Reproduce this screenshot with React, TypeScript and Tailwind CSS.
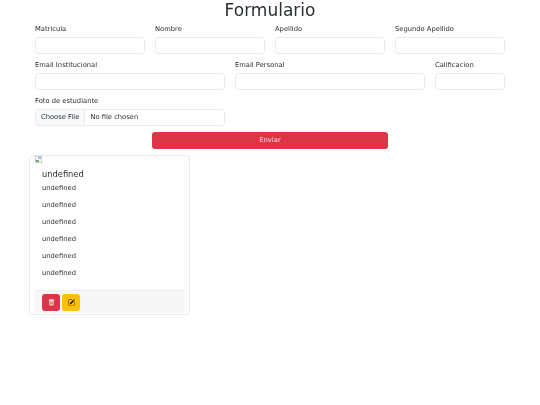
import React from 'react';
import { BsTrashFill, BsPencilSquare } from 'react-icons/bs';

const LINES = [0, 1, 2, 3, 4, 5];

const Field: React.FC<{ label: string; className: string }> = ({ label, className }) => (
    <div className={className}>
        <label className="block text-[6.75px] leading-[13px] mb-[1px]">{label}</label>
        <input type="text" className="block w-full h-[17px] border border-[#e9ecef] rounded-[3px]" />
    </div>
);

export default function App() {
    return (
        <div className="w-[540px] h-[405px] bg-white overflow-hidden">
            <div className="font-['DejaVu_Sans',sans-serif] text-[#2b3035] will-change-transform">
                <h1 className="text-center text-[17px] leading-[21px] font-normal">Formulario</h1>

                <form className="px-[30px]">
                    <div className="flex mt-[2px]">
                        <Field label="Matricula" className="w-[120px] px-[5px]" />
                        <Field label="Nombre" className="w-[120px] px-[5px]" />
                        <Field label="Apellido" className="w-[120px] px-[5px]" />
                        <Field label="Segundo Apellido" className="w-[120px] px-[5px]" />
                    </div>
                    <div className="flex mt-[5px]">
                        <Field label="Email Institucional" className="w-[200px] px-[5px]" />
                        <Field label="Email Personal" className="w-[200px] px-[5px]" />
                        <Field label="Calificacion" className="w-[80px] px-[5px]" />
                    </div>
                    <div className="flex mt-[5px]">
                        <div className="w-[200px] px-[5px]">
                            <label className="block text-[6.75px] leading-[13px] mb-[1px]">Foto de estudiante</label>
                            <div className="flex items-center h-[17px] border border-[#e9ecef] rounded-[3px] text-[6.75px] overflow-hidden">
                                <span className="h-full flex items-center px-[5px] bg-[#f8f9fa] border-r border-[#e9ecef]">Choose File</span>
                                <span className="px-[5px]">No file chosen</span>
                            </div>
                        </div>
                    </div>
                    <div className="flex justify-center mt-[6px]">
                        <button type="button" className="w-[236px] h-[17px] rounded-[3px] bg-[#dc3545] text-[#fbe3e5] text-[6.75px]">Enviar</button>
                    </div>
                </form>

                <div className="ml-[29px] mt-[6px] w-[161px] h-[160px] border border-[#e9ebed] rounded-[4px] flex flex-col">
                    <div className="pl-[5px] h-[8px]">
                        <svg width="7" height="7" viewBox="0 0 7 7">
                            <rect x="0.5" y="0.5" width="6" height="6" fill="#fff" stroke="#c5ccd4" />
                            <rect x="1" y="4" width="3" height="2" fill="#6fae5c" />
                            <rect x="3" y="1" width="3" height="2" fill="#a9c4ea" />
                        </svg>
                    </div>
                    <div className="flex-1 px-[12px] pt-[4px]">
                        <div className="text-[8.3px] leading-[12px] mb-[3px]">undefined</div>
                        {LINES.map(i => (
                            <p key={i} className="text-[6.75px] leading-[11px] mb-[6px]">undefined</p>
                        ))}
                    </div>
                    <div className="mx-[5px] mb-[1px] h-[23px] bg-[#f7f7f7] border-t border-[#eeeeee] flex items-center gap-[2px] px-[7px]">
                        <button type="button" className="w-[18px] h-[17px] rounded-[3px] bg-[#dc3545] flex items-center justify-center text-[#f8d7da]">
                            <BsTrashFill size={7} />
                        </button>
                        <button type="button" className="w-[18px] h-[17px] rounded-[3px] bg-[#ffc107] flex items-center justify-center text-black">
                            <BsPencilSquare size={7} />
                        </button>
                    </div>
                </div>
            </div>
        </div>
    );
}
